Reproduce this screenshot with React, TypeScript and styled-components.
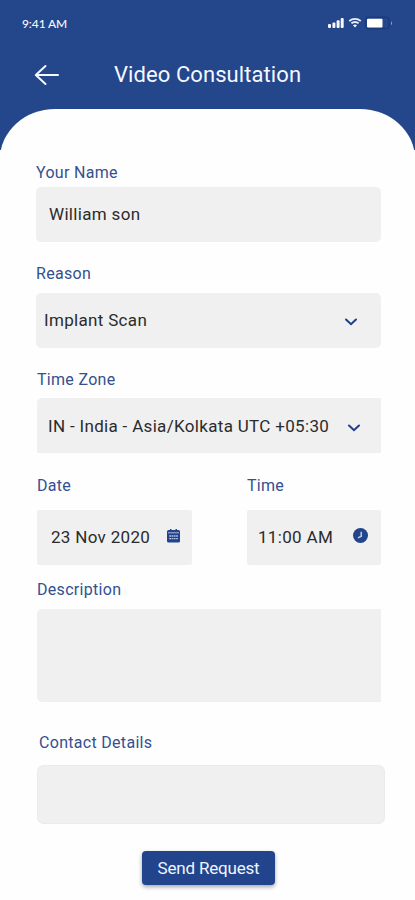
import React from 'react';
import styled, { createGlobalStyle } from 'styled-components';

const GlobalStyle = createGlobalStyle`
  * { box-sizing: border-box; }
  body { margin: 0; background: #fefefe; font-family: Roboto, sans-serif; }
`;

const Screen = styled.main`
  width: 415px;
  height: 900px;
  overflow: hidden;
  background: #fefefe;
`;

const Header = styled.header`
  height: 150px;
  display: flex;
  flex-direction: column;
  background: #24468b;
  color: #f5f8ff;
`;

const StatusBar = styled.div`
  height: 46px;
  padding: 0 22px;
  display: flex;
  align-items: center;
  justify-content: space-between;
`;

const Clock = styled.span`
  padding-top: 2px;
  font: 500 12px/16px Lato, sans-serif;
  letter-spacing: -0.1px;
`;

const TitleBar = styled.div`
  height: 63px;
  padding: 0 0 6px 34px;
  display: flex;
  align-items: center;
`;

const BackButton = styled.button`
  width: 26px;
  height: 24px;
  margin: 0 54px 0 0;
  padding: 0;
  border: 0;
  background: none;
  color: inherit;
`;

const Title = styled.h1`
  margin: 0;
  font-size: 22px;
  line-height: 28px;
  font-weight: 400;
  letter-spacing: 0.08px;
  white-space: nowrap;
`;

const SheetTop = styled.div`
  flex: 1;
  background: #fefefe;
  border-radius: 55px 55px 0 0 / 50px 50px 0 0;
  height: 100px;
`;

const SheetClip = styled.div`
  height: 41px;
  overflow: hidden;
  display: flex;
  align-items: flex-start;
`;

const Form = styled.form`
  padding: 12px 0 0 36px;
  display: flex;
  flex-direction: column;
  align-items: flex-start;
`;

const Field = styled.label<{ $gap: number; $indent?: number }>`
  display: flex;
  flex-direction: column;
  gap: ${(p) => p.$gap}px;
  margin-left: ${(p) => p.$indent ?? 0}px;
`;

const Label = styled.span<{ $drop?: number; $indent?: number }>`
  height: 20px;
  padding-top: ${(p) => p.$drop ?? 1}px;
  padding-left: ${(p) => p.$indent ?? 0}px;
  font-size: 16px;
  line-height: 20px;
  letter-spacing: 0.3px;
  color: #34508f;
  white-space: nowrap;
`;

const Box = styled.div<{ $w: number; $h?: number; $left?: number; $right?: number; $radius?: string; $edge?: boolean }>`
  width: ${(p) => p.$w}px;
  height: ${(p) => p.$h ?? 55}px;
  padding: 0 ${(p) => p.$right ?? 0}px 0 ${(p) => p.$left ?? 0}px;
  display: flex;
  align-items: center;
  justify-content: space-between;
  background: #f0f0f0;
  border-radius: ${(p) => p.$radius ?? '5px'};
  box-shadow: ${(p) => (p.$edge ? 'inset 0 0 0 1px #ebebeb' : 'none')};
`;

const Value = styled.span<{ $lift?: number }>`
  padding-bottom: ${(p) => p.$lift ?? 2}px;
  font-size: 17px;
  line-height: 22px;
  letter-spacing: 0.32px;
  color: #2b2b2b;
  white-space: nowrap;
`;

const Adornment = styled.span<{ $up?: number; $down?: number }>`
  display: flex;
  padding: ${(p) => p.$down ?? 0}px 0 ${(p) => p.$up ?? 0}px;
`;

const Spacer = styled.div<{ $h: number }>`
  height: ${(p) => p.$h}px;
`;

const Row = styled.div`
  display: flex;
  gap: 55px;
  margin-left: 1px;
`;

const Submit = styled.button`
  width: 133px;
  height: 34px;
  margin-left: 106px;
  padding: 0;
  border: 0;
  border-radius: 4px;
  background: #21448d;
  color: #f0f4ff;
  font: 400 17px/34px Roboto, sans-serif;
  letter-spacing: -0.2px;
  white-space: nowrap;
  box-shadow: 0 2px 4px rgba(0, 0, 0, 0.35);
`;

const BackArrow = () => (
  <svg width="26" height="24" viewBox="0 0 26 24" fill="none" stroke="currentColor" strokeWidth="2" strokeLinecap="round">
    <path d="M24 12H2M11.5 3L1.8 12L11.5 21" strokeLinejoin="round" />
  </svg>
);

const StatusIcons = () => (
  <svg width="66" height="14" viewBox="0 0 66 14" fill="#f5f8ff">
    <rect x="1" y="8" width="3" height="4" rx="1" />
    <rect x="5.4" y="6.4" width="3" height="5.6" rx="1" />
    <rect x="9.6" y="4.2" width="3" height="7.8" rx="1" />
    <rect x="13.7" y="2" width="3" height="10" rx="1" />
    <g fill="none" stroke="#e9effb" strokeWidth="1.9">
      <path d="M22.2 5Q28 .8 33.8 5" />
      <path d="M24.4 7.3Q28 4.6 31.6 7.3" />
    </g>
    <path d="M26 9.2Q28 7.8 30 9.2L28 11.5Z" />
    <rect x="38.6" y="1.2" width="23.4" height="11.6" rx="2.5" fill="none" stroke="#1a3575" />
    <rect x="40" y="2.8" width="15.5" height="8.6" rx="1" fill="#fff" />
    <path d="M64.2 5.2Q66 7 64.2 9.2Z" fill="#a5b5da" />
  </svg>
);

const Chevron = () => (
  <svg width="14" height="10" viewBox="0 0 14 10" fill="none" stroke="#213c8c" strokeWidth="2" strokeLinecap="round">
    <path d="M2 2.5L7 7.2L12 2.5" />
  </svg>
);

const CalendarIcon = () => (
  <svg width="13" height="14" viewBox="0 0 13 14">
    <path d="M3 0H4.5V1H8.5V0H10V1H11.5Q13 1 13 2.5V12Q13 13.5 11.5 13.5H1.5Q0 13.5 0 12V2.5Q0 1 1.5 1H3Z" fill="#21448d" />
    <path d="M1 3.8H12" stroke="#b8c5e2" strokeWidth=".9" />
    <path d="M2.2 7H10.9M2.2 9.7H10.9" stroke="#aebddf" strokeWidth="1.3" strokeDasharray="1.8 .5" />
  </svg>
);

const ClockIcon = () => (
  <svg width="15" height="15" viewBox="0 0 14 14">
    <circle cx="7" cy="7" r="7" fill="#21448d" />
    <path d="M7.7 3.5V7.6L4.6 9.2" fill="none" stroke="#b9c7e6" strokeWidth="1.5" />
  </svg>
);

export default function App() {
  return (
    <Screen>
      <GlobalStyle />
      <Header>
        <StatusBar>
          <Clock>9:41 AM</Clock>
          <StatusIcons />
        </StatusBar>
        <TitleBar>
          <BackButton type="button" aria-label="Back"><BackArrow /></BackButton>
          <Title>Video Consultation</Title>
        </TitleBar>
        <SheetClip><SheetTop /></SheetClip>
      </Header>
      <Form>
        <Field $gap={5}>
          <Label>Your Name</Label>
          <Box $w={345} $left={13}><Value>William son</Value></Box>
        </Field>
        <Spacer $h={21} />
        <Field $gap={10}>
          <Label>Reason</Label>
          <Box $w={345} $left={8} $right={23}>
            <Value>Implant Scan</Value>
            <Adornment $down={2}><Chevron /></Adornment>
          </Box>
        </Field>
        <Spacer $h={21} />
        <Field $gap={9} $indent={1}>
          <Label>Time Zone</Label>
          <Box $w={344} $left={11} $right={20} $radius="5px 0 0 0">
            <Value $lift={0}>IN - India - Asia/Kolkata UTC +05:30</Value>
            <Adornment $down={4}><Chevron /></Adornment>
          </Box>
        </Field>
        <Spacer $h={21} />
        <Row>
          <Field $gap={16}>
            <Label $drop={2}>Date</Label>
            <Box $w={155} $left={14} $right={12} $radius="2px">
              <Value $lift={1}>23 Nov 2020</Value>
              <Adornment $up={4}><CalendarIcon /></Adornment>
            </Box>
          </Field>
          <Field $gap={16}>
            <Label $drop={2}>Time</Label>
            <Box $w={134} $left={11} $right={13} $radius="2px">
              <Value $lift={1}>11:00 AM</Value>
              <Adornment $up={4}><ClockIcon /></Adornment>
            </Box>
          </Field>
        </Row>
        <Spacer $h={14} />
        <Field $gap={10} $indent={1}>
          <Label>Description</Label>
          <Box $w={344} $h={93} $radius="5px 0 0 5px" />
        </Field>
        <Spacer $h={30} />
        <Field $gap={13} $indent={1}>
          <Label $indent={2}>Contact Details</Label>
          <Box $w={348} $h={59} $radius="7px" $edge />
        </Field>
        <Spacer $h={27} />
        <Submit type="button">Send Request</Submit>
      </Form>
    </Screen>
  );
}
